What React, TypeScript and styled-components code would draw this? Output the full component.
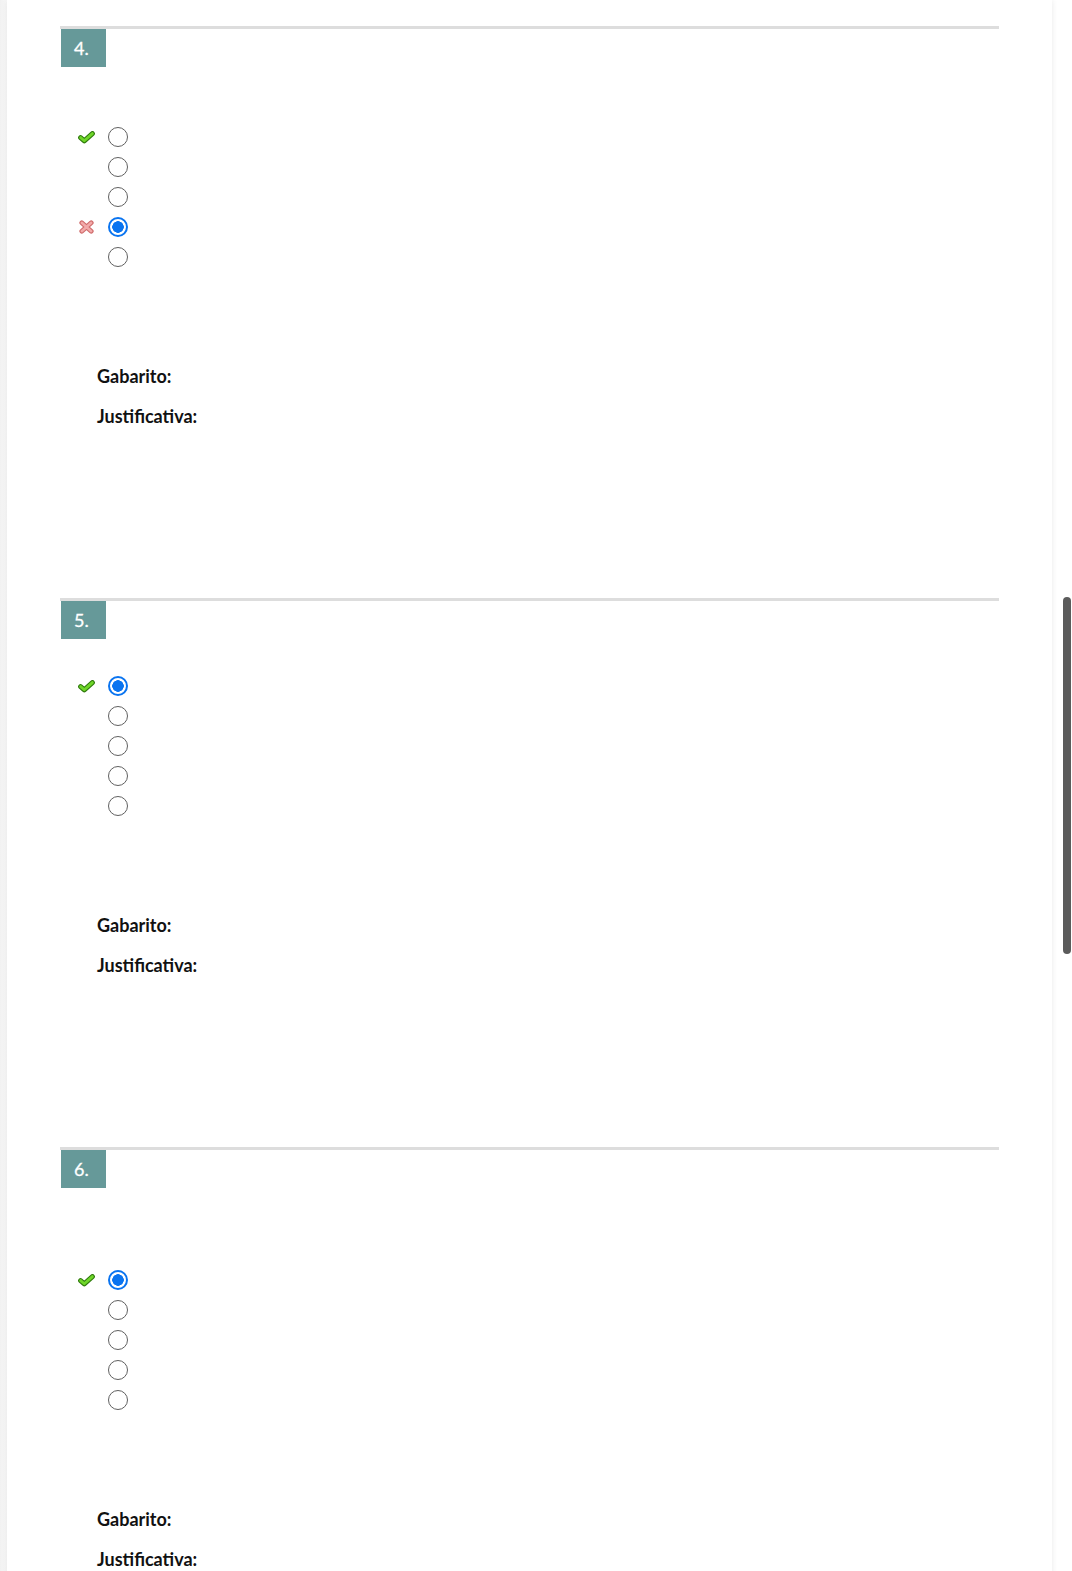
import React from "react";
import styled, { createGlobalStyle } from "styled-components";

const Global = createGlobalStyle`
  html, body { margin: 0; padding: 0; background: #ffffff; }
  body { font-family: Lato, "Open Sans", Arial, sans-serif; color: #1a1a1a; }
  * { box-sizing: border-box; }
`;

const Viewport = styled.div`
  position: relative;
  width: 1072px;
  height: 1571px;
  overflow: hidden;
  background: linear-gradient(to right, #f1f1f1, #fafafa 7px, #fff 7px);
`;

const Card = styled.main`
  margin-left: 7px;
  width: 1045px;
  min-height: 1571px;
  background: #ffffff;
  box-shadow: 0 0 6px rgba(0, 0, 0, 0.09);
  padding: 26px 53px 0 53px;
`;

const Section = styled.section`
  border-top: 3px solid #dddddd;
  padding-bottom: 170px;
`;

const Badge = styled.div`
  margin-left: 1px;
  width: 45px;
  height: 38px;
  background: #669999;
  color: #ffffff;
  font-family: Lato, Arial, sans-serif;
  font-size: 18px;
  line-height: 38px;
  padding-left: 13px;
  -webkit-text-stroke: 0.3px #ffffff;
`;

const Options = styled.div<{ $top: number }>`
  margin-top: ${(p) => p.$top}px;
  margin-left: 18px;
  display: flex;
  flex-direction: column;
`;

const OptionRow = styled.div`
  height: 30px;
  display: flex;
  align-items: center;
  gap: 13px;
`;

const IconSlot = styled.span`
  width: 17px;
  height: 14px;
  display: flex;
  align-items: center;
  justify-content: center;
`;

const Radio = styled.span<{ $checked?: boolean }>`
  width: 20px;
  height: 20px;
  border-radius: 50%;
  border: ${(p) => (p.$checked ? "2px solid #0a74f0" : "1.6px solid #606060")};
  background: ${(p) =>
    p.$checked ? "radial-gradient(circle, #0a74f0 0 5.5px, #ffffff 6px)" : "#ffffff"};
  display: inline-block;
`;

const Answer = styled.div`
  margin-top: 92px;
  margin-left: 37px;
  display: flex;
  flex-direction: column;
  gap: 16px;
`;

const Label = styled.div`
  font-family: Lato, Arial, sans-serif;
  font-weight: 700;
  font-size: 18px;
  line-height: 24px;
  color: #111111;
`;

const ScrollThumb = styled.div`
  position: absolute;
  left: 1063px;
  top: 597px;
  width: 8px;
  height: 357px;
  border-radius: 4px;
  background: #5b5b5b;
`;

const CheckIcon = () => (
  <svg width="17" height="13" viewBox="0 0 17 13">
    <path d="M2.6 6.6 L6.3 9.8 L14.4 2.6" fill="none" stroke="#2f7a0c" strokeWidth="5" strokeLinecap="round" strokeLinejoin="round" />
    <path d="M2.6 6.6 L6.3 9.8 L14.4 2.6" fill="none" stroke="#6fd629" strokeWidth="2.8" strokeLinecap="round" strokeLinejoin="round" />
  </svg>
);

const CrossIcon = () => (
  <svg width="15" height="14" viewBox="0 0 15 14">
    <path d="M2.8 2.8 L12.2 11.2 M12.2 2.8 L2.8 11.2" fill="none" stroke="#cf6b6b" strokeWidth="4.8" strokeLinecap="round" />
    <path d="M2.8 2.8 L12.2 11.2 M12.2 2.8 L2.8 11.2" fill="none" stroke="#f2a9a9" strokeWidth="2.5" strokeLinecap="round" />
  </svg>
);

type Mark = "ok" | "bad" | null;
type Question = {
  n: number;
  top: number;
  options: { mark: Mark; checked: boolean }[];
};

const questions: Question[] = [
  {
    n: 4,
    top: 55,
    options: [
      { mark: "ok", checked: false },
      { mark: null, checked: false },
      { mark: null, checked: false },
      { mark: "bad", checked: true },
      { mark: null, checked: false },
    ],
  },
  {
    n: 5,
    top: 32,
    options: [
      { mark: "ok", checked: true },
      { mark: null, checked: false },
      { mark: null, checked: false },
      { mark: null, checked: false },
      { mark: null, checked: false },
    ],
  },
  {
    n: 6,
    top: 77,
    options: [
      { mark: "ok", checked: true },
      { mark: null, checked: false },
      { mark: null, checked: false },
      { mark: null, checked: false },
      { mark: null, checked: false },
    ],
  },
];

export default function App() {
  return (
    <Viewport>
      <Global />
      <Card>
        {questions.map((q) => (
          <Section key={q.n}>
            <Badge>{q.n}.</Badge>
            <Options $top={q.top}>
              {q.options.map((o, i) => (
                <OptionRow key={i}>
                  <IconSlot>
                    {o.mark === "ok" && <CheckIcon />}
                    {o.mark === "bad" && <CrossIcon />}
                  </IconSlot>
                  <Radio $checked={o.checked} />
                </OptionRow>
              ))}
            </Options>
            <Answer>
              <Label>Gabarito:</Label>
              <Label>Justificativa:</Label>
            </Answer>
          </Section>
        ))}
      </Card>
      <ScrollThumb />
    </Viewport>
  );
}
